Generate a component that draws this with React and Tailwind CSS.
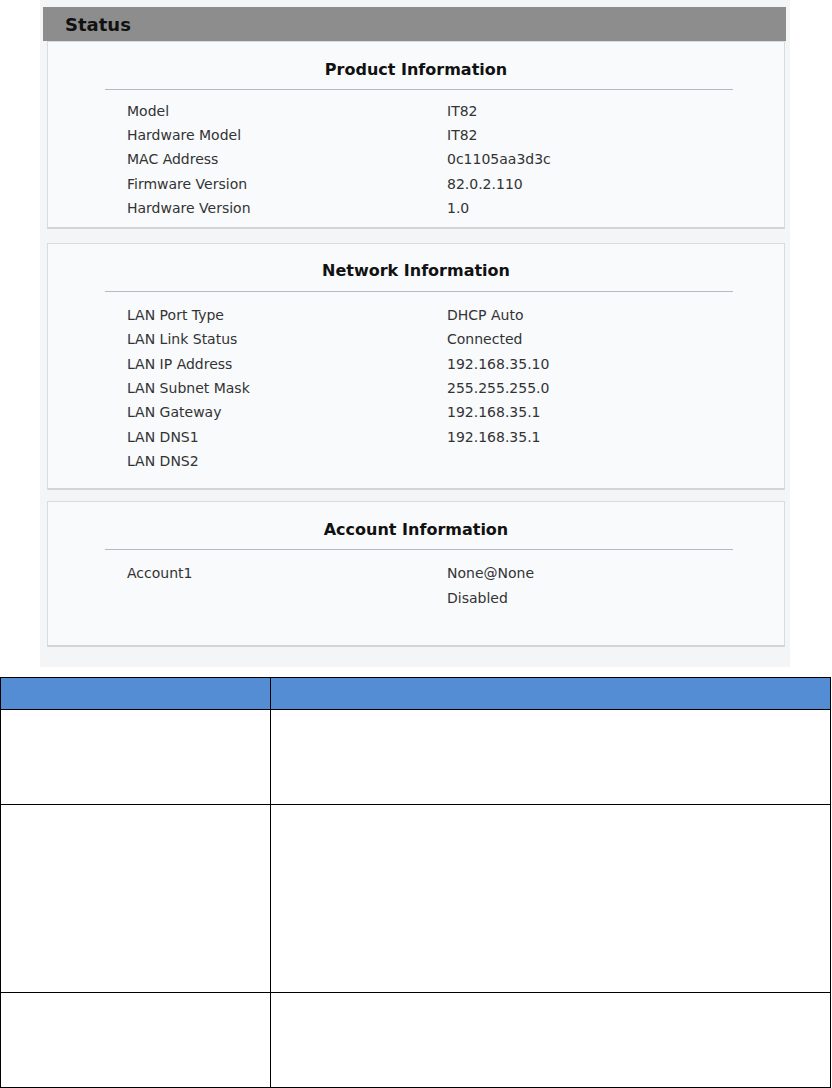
import React from "react";

const font = { fontFamily: '"DejaVu Sans", Tahoma, sans-serif' };

function Panel({ title, rows, pt, headGap, divGap, pb }) {
  return (
    <div className="border border-[#d9dcdf] border-b-2 border-b-[#d2d4d6] bg-[#f8fafc]">
      <div className={pt}>
        <div className="text-center text-[16px] font-bold leading-[20px] text-[#111]">{title}</div>
        <div className={`${headGap} ml-[57px] mr-[51px] h-px bg-[#b4bac0]`} />
        <div className={`${divGap} ${pb}`}>
          {rows.map(([k, v], i) => (
            <div key={i} className="flex h-[24.3px] items-center text-[14px] text-[#333]">
              <div className="w-[399px] pl-[79px]">{k}</div>
              <div>{v}</div>
            </div>
          ))}
        </div>
      </div>
    </div>
  );
}

export default function App() {
  return (
    <div className="relative h-[1088px] w-[832px] overflow-hidden bg-white" style={font}>
      <div className="ml-[40px] h-[667px] w-[750px] bg-[#f3f5f7] pl-[3px] pr-[4px] pt-[7px]">
        <div className="flex h-[34px] items-center bg-[#8d8d8d] pl-[22px] text-[18px] font-bold text-[#111]">
          Status
        </div>
        <div className="px-[4px] pr-[1px]">
          <Panel
            title="Product Information"
            pt="pt-[18px]"
            headGap="mt-[9px]"
            divGap="mt-[9px]"
            pb="pb-[7px]"
            rows={[
              ["Model", "IT82"],
              ["Hardware Model", "IT82"],
              ["MAC Address", "0c1105aa3d3c"],
              ["Firmware Version", "82.0.2.110"],
              ["Hardware Version", "1.0"],
            ]}
          />
          <div className="h-[14px]" />
          <Panel
            title="Network Information"
            pt="pt-[17px]"
            headGap="mt-[10px]"
            divGap="mt-[11px]"
            pb="pb-[14px]"
            rows={[
              ["LAN Port Type", "DHCP Auto"],
              ["LAN Link Status", "Connected"],
              ["LAN IP Address", "192.168.35.10"],
              ["LAN Subnet Mask", "255.255.255.0"],
              ["LAN Gateway", "192.168.35.1"],
              ["LAN DNS1", "192.168.35.1"],
              ["LAN DNS2", ""],
            ]}
          />
          <div className="h-[11px]" />
          <Panel
            title="Account Information"
            pt="pt-[18px]"
            headGap="mt-[9px]"
            divGap="mt-[12px]"
            pb="pb-[35px]"
            rows={[
              ["Account1", "None@None"],
              ["", "Disabled"],
            ]}
          />
        </div>
      </div>
      <div className="h-[10px]" />
      <table className="w-[831px] table-fixed border-collapse">
        <tbody>
          <tr className="h-[32px] bg-[#548dd4]">
            <td className="w-[270px] border border-black"></td>
            <td className="border border-black"></td>
          </tr>
          <tr className="h-[95px]">
            <td className="border border-black"></td>
            <td className="border border-black"></td>
          </tr>
          <tr className="h-[188px]">
            <td className="border border-black"></td>
            <td className="border border-black"></td>
          </tr>
          <tr className="h-[95px]">
            <td className="border border-black"></td>
            <td className="border border-black"></td>
          </tr>
        </tbody>
      </table>
    </div>
  );
}
